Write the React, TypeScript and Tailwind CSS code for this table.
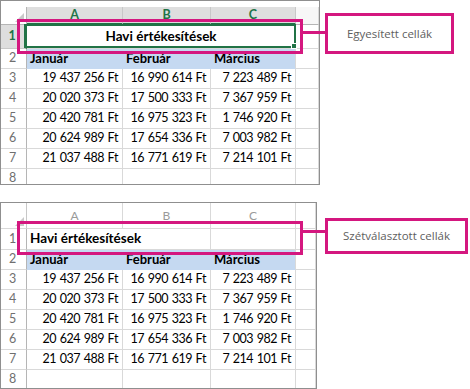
import React from "react";

const data = [
  ["19 437 256 Ft", "16 990 614 Ft", "7 223 489 Ft"],
  ["20 020 373 Ft", "17 500 333 Ft", "7 367 959 Ft"],
  ["20 420 781 Ft", "16 975 323 Ft", "1 746 920 Ft"],
  ["20 624 989 Ft", "17 654 336 Ft", "7 003 982 Ft"],
  ["21 037 488 Ft", "16 771 619 Ft", "7 214 101 Ft"],
];

const cols = "grid grid-cols-[26px_96px_88px_85px_1fr]";
const cell = "border-r border-b border-[#d9d9d9]";
const cellFont = "font-['Lato',sans-serif] text-[12.5px] text-black leading-none";
const rowHead =
  "border-r border-b border-[#d9d9d9] border-r-[#b5b5b5] flex items-center justify-center pr-[2px] text-[#6f6f6f] font-['Lato',sans-serif] text-[12.5px]";

function Corner() {
  return (
    <svg width="9" height="9" viewBox="0 0 9 9" className="absolute right-[2px] bottom-[2px]">
      <polygon points="9,0 9,9 0,9" fill="#c9c9c9" />
    </svg>
  );
}

function DataRows({ first }: { first: number }) {
  const rows: React.ReactNode[] = [];
  rows.push(
    <React.Fragment key="r2">
      <div className={`${rowHead} h-[20px]`}>{first}</div>
      {["Január", "Február", "Március"].map((t, i) => (
        <div
          key={t}
          className={`h-[20px] flex items-center pl-[3px] bg-[#c5d9f1] border-b border-b-[#c5d9f1] border-r ${
            i < 2 ? "border-r-[#c5d9f1]" : "border-r-[#d9d9d9]"
          } ${cellFont} text-[13px] font-bold`}
        >
          {t}
        </div>
      ))}
      <div className={`${cell} h-[20px]`} />
    </React.Fragment>
  );
  data.forEach((r, idx) => {
    rows.push(
      <React.Fragment key={idx}>
        <div className={`${rowHead} h-[20px]`}>{first + 1 + idx}</div>
        {r.map((v, j) => (
          <div
            key={j}
            className={`${cell} h-[20px] flex items-center justify-end pr-[4px] ${cellFont} tracking-[-0.45px] [word-spacing:0.8px]`}
          >
            {v}
          </div>
        ))}
        <div className={`${cell} h-[20px]`} />
      </React.Fragment>
    );
  });
  rows.push(
    <React.Fragment key="r8">
      <div className={`${rowHead} h-[20px]`}>{first + 6}</div>
      <div className={`${cell} h-[20px]`} />
      <div className={`${cell} h-[20px]`} />
      <div className={`${cell} h-[20px]`} />
      <div className={`${cell} h-[20px]`} />
    </React.Fragment>
  );
  return <>{rows}</>;
}

function TopSheet() {
  return (
    <div className="w-[320px] h-[185px] border border-[#8f8f8f] overflow-hidden bg-white">
      <div className="h-[6px]" />
      <div className={cols}>
        <div className={`${cell} h-[18px] relative border-r-[#b5b5b5] border-b-[#b5b5b5]`}>
          <Corner />
        </div>
        {["A", "B", "C"].map((l) => (
          <div
            key={l}
            className="h-[18px] flex items-center justify-center bg-[#dedede] border-r border-r-[#c8c8c8] border-b-2 border-b-[#217346] font-['Lato',sans-serif] text-[12.5px] font-bold text-[#217346]"
          >
            {l}
          </div>
        ))}
        <div className={`${cell} h-[18px] bg-[#f7f7f7] border-b-[#b5b5b5]`} />
        <div className="h-[24px] flex items-center justify-center pr-[2px] bg-[#dedede] border-r-2 border-r-[#217346] border-b border-b-[#c8c8c8] font-['Lato',sans-serif] text-[12.5px] font-bold text-[#217346]">
          1
        </div>
        <div className={`col-span-3 ${cell} h-[24px] flex items-center justify-center ${cellFont} text-[13.5px] font-bold`}>
          Havi értékesítések
        </div>
        <div className={`${cell} h-[24px]`} />
        <DataRows first={2} />
      </div>
    </div>
  );
}

function BottomSheet() {
  return (
    <div className="w-[317px] h-[187px] border border-[#8f8f8f] overflow-hidden bg-white">
      <div className={cols}>
        <div className={`${cell} h-[26px] relative border-r-[#c8c8c8]`}>
          <Corner />
        </div>
        {["A", "B", "C"].map((l) => (
          <div
            key={l}
            className={`${cell} h-[26px] flex items-center justify-center font-['Lato',sans-serif] text-[12px] text-[#9a9a9a]`}
          >
            {l}
          </div>
        ))}
        <div className={`${cell} h-[26px]`} />
        <div className={`${rowHead} h-[21px]`}>1</div>
        <div className={`col-span-2 ${cell} h-[21px] flex items-center pl-[3px] ${cellFont} text-[13.5px] font-bold`}>
          Havi értékesítések
        </div>
        <div className={`${cell} h-[21px]`} />
        <div className={`${cell} h-[21px]`} />
        <DataRows first={2} />
      </div>
    </div>
  );
}

export default function App() {
  return (
    <div className="w-[470px] h-[389px] bg-white overflow-hidden flex flex-col">
      <div className="relative flex items-start">
        <TopSheet />
        <div className="absolute left-[24px] top-[24px] w-[272px] h-[24px] border-2 border-[#217346]" />
        <div className="absolute left-[291px] top-[43px] w-[6px] h-[6px] bg-[#217346] border border-white" />
        <div className="absolute left-[17px] top-[19px] w-[286px] h-[35px] border-[3px] border-[#d4177f]" />
        <div className="absolute left-[302px] top-[31px] w-[24px] h-[3px] bg-[#d4177f]" />
        <div className="ml-[5px] mt-[13px] w-[129px] h-[41px] border-[3px] border-[#d4177f] flex items-center justify-center font-['Open_Sans',sans-serif] text-[11.5px] text-[#5e5e5e]">
          Egyesített cellák
        </div>
      </div>
      <div className="relative flex items-start mt-[17px]">
        <BottomSheet />
        <div className="absolute left-[17px] top-[19px] w-[286px] h-[34px] border-[3px] border-[#d4177f]" />
        <div className="absolute left-[302px] top-[28px] w-[24px] h-[3px] bg-[#d4177f]" />
        <div className="ml-[8px] mt-[16px] w-[143px] h-[36px] border-[3px] border-[#d4177f] flex items-center justify-center font-['Open_Sans',sans-serif] text-[11.5px] text-[#5e5e5e]">
          Szétválasztott cellák
        </div>
      </div>
    </div>
  );
}
